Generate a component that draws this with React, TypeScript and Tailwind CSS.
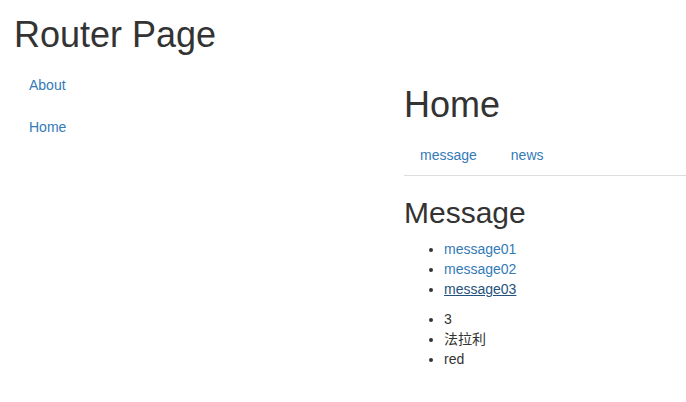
const messages = [
  { id: '01', title: 'message01' },
  { id: '02', title: 'message02' },
  { id: '03', title: 'message03' },
];

const detail = ['3', '法拉利', 'red'];

export default function App() {
  return (
    <div className="min-h-[402px] bg-white pl-[14px] font-['Liberation_Sans','Noto_Sans_CJK_SC',sans-serif] text-[14px] leading-[20px] text-[#333]">
      <h1 className="mt-[15px] mb-[10px] text-[36px] leading-[39.6px] font-normal">Router Page</h1>

      <div className="grid grid-cols-[390px_1fr]">
        <ul className="flex flex-col gap-[2px]">
          <li><a className="block px-[15px] py-[10px] text-[#337ab7]">About</a></li>
          <li><a className="block px-[15px] py-[10px] text-[#337ab7]">Home</a></li>
        </ul>

        <div>
          <h1 className="mt-[20px] mb-[10px] text-[36px] leading-[39.6px] font-normal">Home</h1>
          <ul className="flex border-b border-[#ddd]">
            <li className="-mb-px">
              <a className="mr-[2px] block border border-transparent px-[15px] py-[10px] text-[#337ab7]">message</a>
            </li>
            <li className="-mb-px">
              <a className="mr-[2px] block border border-transparent px-[15px] py-[10px] text-[#337ab7]">news</a>
            </li>
          </ul>

          <h2 className="mt-[20px] mb-[10px] text-[30px] leading-[33px] font-normal">Message</h2>
          <ul className="mb-[10px] list-disc pl-[40px]">
            {messages.map((m) => (
              <li key={m.id}>
                {m.id === '03' ? (
                  <a className="text-[#23527c] underline">{m.title}</a>
                ) : (
                  <a className="text-[#337ab7]">{m.title}</a>
                )}
              </li>
            ))}
          </ul>
          <ul className="list-disc pl-[40px]">
            {detail.map((d) => (
              <li key={d}>{d}</li>
            ))}
          </ul>
        </div>
      </div>
    </div>
  );
}
